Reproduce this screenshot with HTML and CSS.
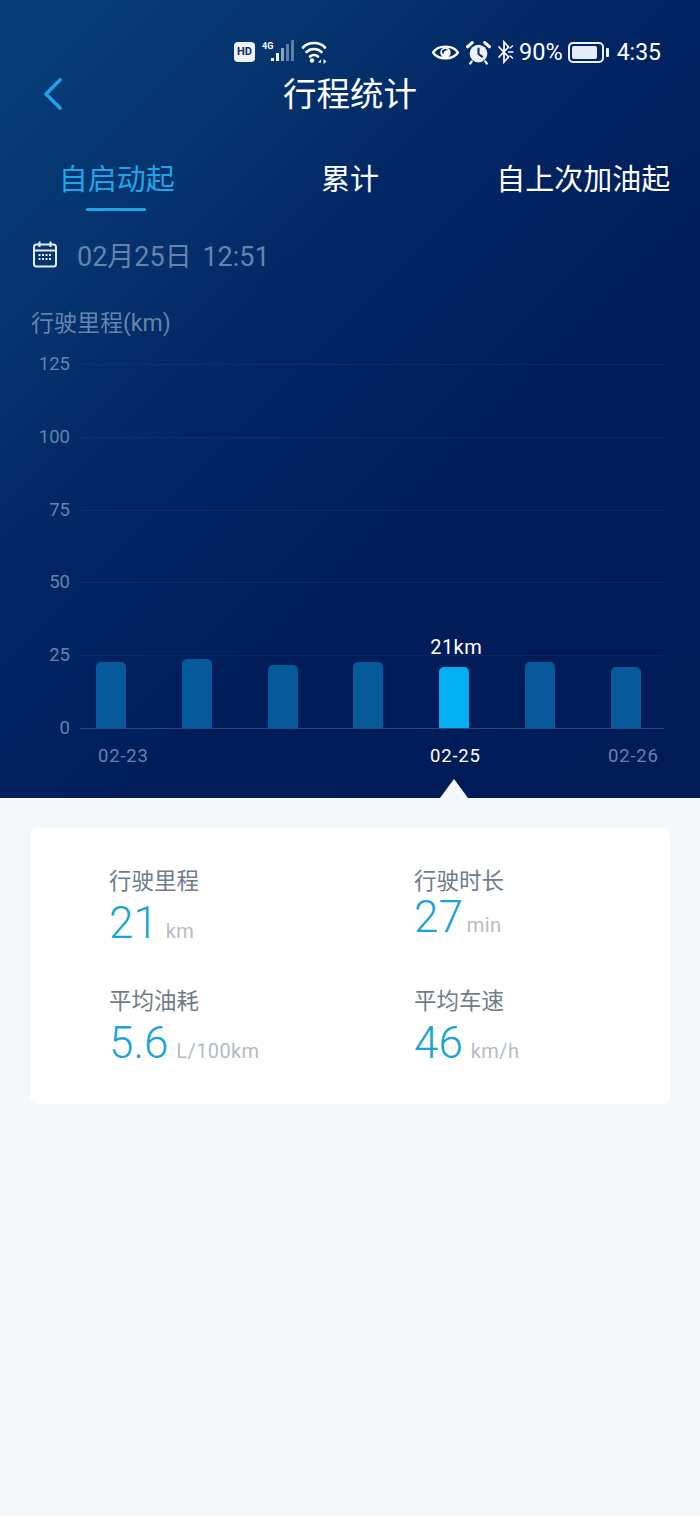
FILE: index.html
```html
<!DOCTYPE html>
<html lang="zh-CN">
<head>
    <meta charset="UTF-8">
    <title>行程统计</title>
    <link rel="stylesheet" href="styles.css">
</head>
<body>
    <div class="hero">
        <div class="status-bar">
            <div class="status-left">
                <span class="hd">HD</span>
                <span class="net">4G</span>
                <svg class="signal" width="24" height="24" viewBox="0 0 24 24">
                    <rect x="1" y="18" width="3" height="3" fill="#fff"/>
                    <rect x="6" y="13" width="3" height="8" fill="#fff"/>
                    <rect x="11" y="8" width="3" height="13" fill="#8aa2c2"/>
                    <rect x="16" y="4" width="3" height="17" fill="#5f7ea6"/>
                    <rect x="21" y="0" width="3" height="21" fill="#5f7ea6"/>
                </svg>
                <svg class="wifi" width="27" height="24" viewBox="0 0 27 24" fill="none" stroke="#fff" stroke-width="2.600" stroke-linecap="round">
                    <path d="M2 7.500C7.500 1.500 18.500 1.500 24 7.500"/>
                    <path d="M5.500 12C9.500 8 16.500 8 20.500 12"/>
                    <path d="M9 16.500C11 14.500 15 14.500 17 16.500"/>
                    <circle cx="11" cy="20.500" r="2.200" fill="#fff" stroke="none"/>
                    <path d="M17 22.500l3-3v3zM22.500 19v5l3-2.500z" fill="#fff" stroke="none"/>
                </svg>
            </div>
            <div class="status-right">
                <svg width="27" height="19" viewBox="0 0 26 18" class="eye">
                    <path d="M1 9C6 1.500 20 1.500 25 9C20 16.500 6 16.500 1 9Z" fill="none" stroke="#fff" stroke-width="2.200"/>
                    <circle cx="13" cy="9" r="5" fill="#fff"/>
                    <path d="M9.500 7.500C10.500 5.500 14 5 15.500 6.500C13 6.500 11 8 11 10.500C10 10 9.500 9 9.500 7.500Z" fill="#0a3068"/>
                </svg>
                <svg width="25" height="25" viewBox="0 0 24 24" class="alarm">
                    <circle cx="12" cy="13" r="8.500" fill="#eef2f7"/>
                    <path d="M12 7.500v6l4 3" fill="none" stroke="#0a3068" stroke-width="2"/>
                    <path d="M1.500 6.500L6 2.500M22.500 6.500L18 2.500" stroke="#eef2f7" stroke-width="3" stroke-linecap="round"/>
                    <path d="M5.500 20.500L4 22.500M18.500 20.500L20 22.500" stroke="#eef2f7" stroke-width="2.200" stroke-linecap="round"/>
                </svg>
                <svg width="17" height="24" viewBox="0 0 16 24" class="bt" fill="none" stroke="#fff" stroke-width="1.700" stroke-linecap="round">
                    <path d="M1.500 7L11 17L6.500 22V2L11 7L1.500 17"/>
                    <path d="M11 12h4.500M12.500 8l2.500-2M12.500 16l2.500 2" stroke-width="1.500"/>
                </svg>
                <span class="pct">90%</span>
                <span class="battery"><span class="battery-fill"></span></span>
                <span class="battery-cap"></span>
                <span class="clock">4:35</span>
            </div>
        </div>

        <div class="title-bar">
            <svg class="back" width="20" height="32" viewBox="0 0 20 32" fill="none" stroke="#1fa3e6" stroke-width="3.600" stroke-linecap="round" stroke-linejoin="round">
                <path d="M17 2L3 16L17 30"/>
            </svg>
            <h1>行程统计</h1>
        </div>

        <div class="tabs">
            <div class="tab active">自启动起</div>
            <div class="tab">累计</div>
            <div class="tab">自上次加油起</div>
        </div>

        <div class="date-row">
            <svg width="26" height="28" viewBox="0 0 26 28" fill="none" stroke="#e4edf6" stroke-width="2">
                <rect x="2" y="4.500" width="22" height="22" rx="2.500"/>
                <path d="M2 10.500H24M7.500 1.500V7M18.500 1.500V7"/>
                <path d="M6.500 15H20M6.500 19H20" stroke-width="2" stroke-dasharray="2 1.500"/>
            </svg>
            <span>02月25日 12:51</span>
        </div>

        <div class="chart-title">行驶里程(km)</div>

        <div class="chart">
            <div class="grid-row"><span class="tick">125</span><span class="line"></span></div>
            <div class="grid-row"><span class="tick">100</span><span class="line"></span></div>
            <div class="grid-row"><span class="tick">75</span><span class="line"></span></div>
            <div class="grid-row"><span class="tick">50</span><span class="line"></span></div>
            <div class="grid-row"><span class="tick">25</span><span class="line"></span></div>
            <div class="grid-row last"><span class="tick">0</span><span class="line base"></span></div>

            <div class="bars">
                <div class="bar" style="height:66px"></div>
                <div class="bar" style="height:69px"></div>
                <div class="bar" style="height:63px"></div>
                <div class="bar" style="height:66px"></div>
                <div class="bar on" style="height:61px"><span class="bar-tip">21km</span></div>
                <div class="bar" style="height:66px"></div>
                <div class="bar" style="height:61px"></div>
            </div>
        </div>

        <div class="x-axis">
            <span>02-23</span>
            <span class="on">02-25</span>
            <span>02-26</span>
        </div>
        <div class="pointer"></div>
    </div>

    <div class="content">
        <div class="card">
            <div class="stat">
                <div class="stat-label">行驶里程</div>
                <div class="stat-value"><b>21</b><span class="unit">km</span></div>
            </div>
            <div class="stat">
                <div class="stat-label">行驶时长</div>
                <div class="stat-value raised"><b>27</b><span class="unit tight">min</span></div>
            </div>
            <div class="stat">
                <div class="stat-label">平均油耗</div>
                <div class="stat-value"><b>5.6</b><span class="unit">L/100km</span></div>
            </div>
            <div class="stat">
                <div class="stat-label">平均车速</div>
                <div class="stat-value"><b>46</b><span class="unit">km/h</span></div>
            </div>
        </div>
    </div>
</body>
</html>
```

FILE: styles.css
```css
* {
    box-sizing: border-box;
}

body {
    margin: 0;
    height: 1516px;
    overflow: hidden;
    background-color: #f5f8fb;
    font-family: Roboto, "Noto Sans CJK SC", sans-serif;
}

.hero {
    position: relative;
    height: 798px;
    padding-top: 39px;
    color: #fff;
    background: linear-gradient(135deg, #083f7a 0%, #05346e 22%, #012563 42%, #001d5a 62%, #001b56 100%);
}

/* status bar */
.status-bar {
    display: flex;
    justify-content: space-between;
    align-items: center;
    height: 26px;
    padding: 0 39px 0 234px;
}

.status-left, .status-right {
    display: flex;
    align-items: center;
}

.hd {
    width: 21px;
    height: 20px;
    border-radius: 4px;
    background-color: #eef2f7;
    color: #0a3068;
    font-size: 11px;
    font-weight: 700;
    line-height: 20px;
    text-align: center;
}

.net {
    align-self: flex-start;
    margin: 1px 0 0 7px;
    font-size: 9px;
    font-weight: 700;
}

.signal {
    width: 24px;
    margin-left: -3px;
}

.wifi {
    margin-left: 7px;
}

.eye {
    margin-right: 7px;
}

.alarm {
    margin-right: 6px;
}

.bt {
    margin-right: 5px;
}

.pct {
    margin-right: 5px;
    font-size: 23.500px;
}

.battery {
    display: block;
    width: 36px;
    height: 21px;
    padding: 2px;
    border: 2px solid #eef2f7;
    border-radius: 5px;
}

.battery-fill {
    display: block;
    width: 90%;
    height: 100%;
    border-radius: 2px;
    background-color: #e6ecf4;
}

.battery-cap {
    width: 3px;
    height: 9px;
    margin-left: 2px;
    border-radius: 1px;
    background-color: #eef2f7;
}

.clock {
    margin-left: 8px;
    font-size: 23px;
}

/* title */
.title-bar {
    position: relative;
    height: 59px;
    display: flex;
    align-items: center;
    justify-content: center;
}

.title-bar h1 {
    margin: 0;
    font-size: 33.500px;
    font-weight: 400;
    line-height: 59px;
}

.back {
    position: absolute;
    left: 43px;
    top: 13px;
}

/* tabs */
.tabs {
    display: grid;
    grid-template-columns: repeat(3, 1fr);
    height: 64px;
    margin-top: 34px;
}

.tab {
    position: relative;
    font-size: 29px;
    line-height: 44px;
    text-align: center;
}

.tab.active {
    color: #1fa6e8;
}

.tab.active::after {
    content: "";
    position: absolute;
    left: 86px;
    top: 50px;
    width: 60px;
    height: 3px;
    border-radius: 2px;
    background-color: #1fa6e8;
}

.date-row {
    display: flex;
    align-items: center;
    gap: 19px;
    height: 30px;
    margin-top: 17px;
    padding-left: 32px;
    color: #6484ad;
    font-size: 27px;
    word-spacing: 4px;
}

.chart-title {
    margin-top: 39px;
    padding-left: 31px;
    color: #6484ad;
    font-size: 23px;
    line-height: 32px;
}

/* chart */
.chart {
    position: relative;
    margin-top: 12px;
}

.grid-row {
    display: flex;
    height: 72.800px;
}

.grid-row.last {
    height: 24px;
}

.tick {
    width: 70px;
    color: #6484ad;
    font-size: 18.500px;
    line-height: 24px;
    text-align: right;
}

.line {
    width: 584px;
    height: 1px;
    margin: 12px 0 0 10px;
    background-color: rgba(60, 105, 160, 0.14);
}

.line.base {
    background-color: rgba(70, 115, 175, 0.5);
}

.bars {
    position: absolute;
    left: 96px;
    bottom: 12px;
    width: 545px;
    display: flex;
    justify-content: space-between;
    align-items: flex-end;
}

.bar {
    position: relative;
    width: 30px;
    border-radius: 5px 5px 0 0;
    background-color: #075a9a;
}

.bar.on {
    background-color: #04aef2;
}

.bar-tip {
    position: absolute;
    left: -9px;
    top: -32px;
    font-size: 20px;
    letter-spacing: 0.4px;
    white-space: nowrap;
}

.x-axis {
    position: relative;
    height: 24px;
    margin-top: 4px;
    color: #6484ad;
    font-size: 18.500px;
    letter-spacing: 0.8px;
    line-height: 24px;
}

.x-axis span {
    position: absolute;
    top: 0;
}

.x-axis span:nth-child(1) {
    left: 98px;
}

.x-axis span:nth-child(2) {
    left: 430px;
    color: #fff;
}

.x-axis span:nth-child(3) {
    left: 608px;
}

.pointer {
    position: absolute;
    left: 440px;
    bottom: 0;
    width: 0;
    height: 0;
    border-left: 14px solid transparent;
    border-right: 14px solid transparent;
    border-bottom: 19px solid #f5f8fb;
}

/* stats card */
.content {
    padding: 30px;
}

.card {
    display: grid;
    grid-template-columns: 305px 1fr;
    grid-auto-rows: 120px;
    height: 276px;
    padding: 36px 0 0 79px;
    border-radius: 8px;
    background-color: #fff;
}

.stat-label {
    color: #6f7c8a;
    font-size: 22.500px;
    line-height: 34px;
}

.stat-value {
    display: flex;
    align-items: baseline;
    height: 50px;
    color: #1ba3d6;
    line-height: 50px;
}

.stat-value.raised {
    margin-top: -6px;
}

.stat-value b {
    font-size: 44px;
    font-weight: 300;
}

.unit {
    margin-left: 8px;
    color: #b5bcc4;
    font-size: 20px;
    letter-spacing: 0.4px;
}

.unit.tight {
    margin-left: 4px;
}
```
